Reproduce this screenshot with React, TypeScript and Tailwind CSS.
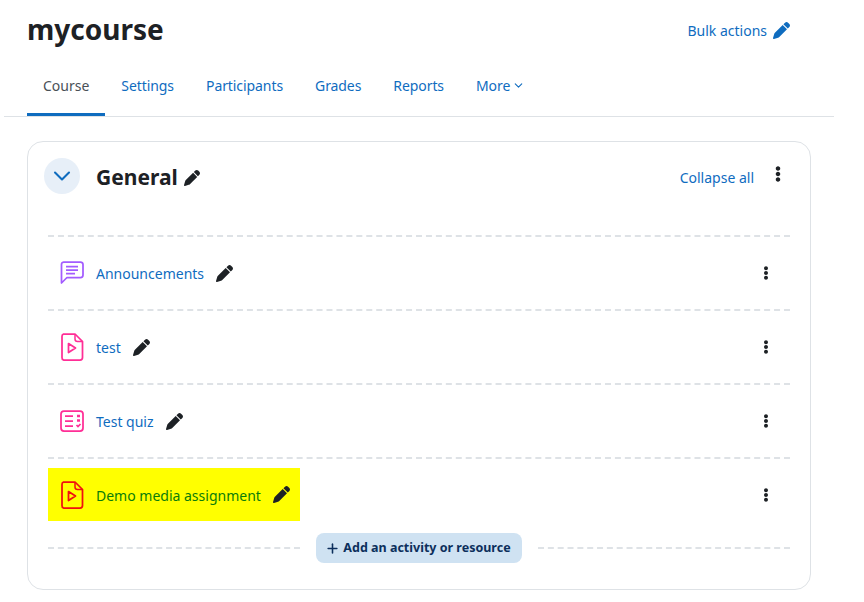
import React from "react";
import { FaEllipsisV } from "react-icons/fa";
import { FaPen } from "react-icons/fa6";
import { LuChevronDown, LuPlus } from "react-icons/lu";

const tabs = ["Settings", "Participants", "Grades", "Reports"];

const ChatIcon = () => (
  <svg width="24" height="24" viewBox="0 0 24 24" fill="none" stroke="#a35cff">
    <path d="M3.500 1h17a2.500 2.500 0 0 1 2.500 2.500v10.500a2.500 2.500 0 0 1-2.500 2.500h-13.500l-5.500 5.500v-18.500a2.500 2.500 0 0 1 2.500-2.500z" strokeWidth="1.750" strokeLinejoin="round" />
    <path d="M6 5.500h12M6 9h12M6 12.500h9" strokeWidth="1.750" />
  </svg>
);

const FileIcon = ({ color }: { color: string }) => (
  <svg width="24" height="28" viewBox="0 0 24 28" fill="none" stroke={color} strokeWidth="1.750">
    <path d="M3.500 1h11.500l7.500 7.500v16a2.500 2.500 0 0 1-2.500 2.500h-16.500a2.500 2.500 0 0 1-1.500-2.500v-21a2.500 2.500 0 0 1 1.500-2.500z" strokeLinejoin="round" />
    <path d="M15 1v5a2.500 2.500 0 0 0 2.500 2.500h5" strokeWidth="1.500" />
    <path d="M8.500 10.500l7 4.500-7 4.500z" strokeLinejoin="round" />
  </svg>
);

const QuizIcon = () => (
  <svg width="24" height="22" viewBox="0 0 24 22" fill="none" stroke="#ff2e96" strokeWidth="1.750">
    <rect x="1" y="1" width="22" height="20" rx="3" />
    <path d="M5 6h8M5 11h8M5 16h8" />
    <path d="M17 6h3M17 10.500h3" strokeWidth="2.500" />
    <path d="M16.500 15l1.500 1.500 2.500-2.500" />
  </svg>
);

type RowProps = {
  icon: React.ReactNode;
  label: string;
  highlight?: boolean;
};

const ActivityRow = ({ icon, label, highlight }: RowProps) => (
  <div className={`flex h-[74px] border-t-2 border-dashed border-[#dee2e6] ${highlight ? "items-start pt-[9px]" : "items-center"}`}>
    <div className={`flex h-[53px] items-center pl-3 ${highlight ? "w-[252px] bg-[#ffff00] text-[#0a7d0a]" : "text-[#0f6cbf]"}`}>
      <span className="flex w-[24px] justify-center">{icon}</span>
      <span className="ml-3 mt-px">{label}</span>
      <FaPen className="ml-3 text-[#1d2125]" size={17} />
    </div>
    <div className={`ml-auto mr-[17px] flex ${highlight ? "h-[53px] items-center" : ""}`}>
      <FaEllipsisV className="text-[#1d2125]" size={14} />
    </div>
  </div>
);

export default function App() {
  return (
    <div className="h-[602px] w-[864px] overflow-hidden bg-white font-['Noto_Sans',sans-serif] text-[14px] text-[#1d2125]">
      <div className="flex h-[58px] items-center pl-[27px] pr-[74px]">
        <h1 className="text-[28px] font-bold">mycourse</h1>
        <div className="ml-auto mt-[3px] flex items-center gap-[6px] text-[#0f6cbf]">
          Bulk actions
          <FaPen size={17} />
        </div>
      </div>

      <div className="ml-1 flex h-[59px] w-[830px] items-stretch border-b border-[#dee2e6] pl-[23px] text-[#0f6cbf]">
        <div className="flex items-center border-b-[3px] border-[#0f6cbf] px-4 text-[#495057]">Course</div>
        {tabs.map((tab) => (
          <div key={tab} className="flex items-center px-4 pb-[3px] tracking-[-0.08px]">
            {tab}
          </div>
        ))}
        <div className="flex items-center gap-[2px] px-4 pb-[3px] tracking-[-0.08px]">
          More
          <LuChevronDown size={13} strokeWidth={2} />
        </div>
      </div>

      <div className="ml-[27px] mt-6 h-[449px] w-[784px] rounded-2xl border border-[#dee2e6]">
        <div className="mx-4 mt-4 flex h-[36px] items-center">
          <div className="flex h-9 w-9 items-center justify-center rounded-full bg-[#e7eff8] text-[#0f6cbf]">
            <LuChevronDown size={28} strokeWidth={1.800} />
          </div>
          <h2 className="ml-4 mt-[3px] text-[21px] font-bold">General</h2>
          <FaPen className="ml-[6px] mt-[3px]" size={16} />
          <span className="ml-auto mt-[3px] text-[#0f6cbf]">Collapse all</span>
          <FaEllipsisV className="ml-4 mr-2 mb-1" size={16} />
        </div>

        <div className="mx-5 mt-[41px]">
          <ActivityRow icon={<ChatIcon />} label="Announcements" />
          <ActivityRow icon={<FileIcon color="#ff2e96" />} label="test" />
          <ActivityRow icon={<QuizIcon />} label="Test quiz" />
          <ActivityRow icon={<FileIcon color="#f01010" />} label="Demo media assignment" highlight />
          <div className="mt-[2px] flex items-center gap-4">
            <div className="flex-1 border-t-2 border-dashed border-[#dee2e6]" />
            <button className="flex h-[30px] w-[206px] items-center justify-center gap-[3px] rounded-lg bg-[#cfe2f2] pr-[2px] text-[12.500px] font-bold text-[#0c2f5c]">
              <LuPlus size={15} strokeWidth={2.500} />
              Add an activity or resource
            </button>
            <div className="flex-1 border-t-2 border-dashed border-[#dee2e6]" />
          </div>
        </div>
      </div>
    </div>
  );
}
